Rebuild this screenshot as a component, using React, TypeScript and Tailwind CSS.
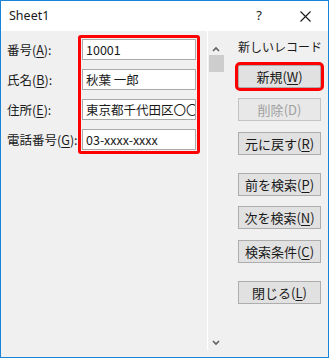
import React from "react";

const jp = { fontFamily: '"Noto Sans CJK JP", "Noto Sans", sans-serif' };

const fields = [
  { label: "番号", key: "A", value: "10001" },
  { label: "氏名", key: "B", value: "秋葉 一郎" },
  { label: "住所", key: "E", value: "東京都千代田区〇〇" },
  { label: "電話番号", key: "G", value: "03-xxxx-xxxx" },
];

function Btn({
  label,
  mnemonic,
  disabled,
  className = "",
}: {
  label: string;
  mnemonic: string;
  disabled?: boolean;
  className?: string;
}) {
  return (
    <div
      className={`w-[83px] h-[23px] flex items-center justify-center text-[13px] border ${
        disabled
          ? "bg-[#e8e8e8] border-[#c4c4c4] text-[#a0a0a0]"
          : "bg-[#e1e1e1] border-[#adadad] text-[#1a1a1a]"
      } ${className}`}
    >
      {label}(
      {disabled ? <span>{mnemonic}</span> : <span className="underline underline-offset-2">{mnemonic}</span>})
    </div>
  );
}

export default function App() {
  return (
    <div
      className="w-[329px] h-[358px] border border-[#1883d7] flex flex-col bg-[#f0f0f0] overflow-hidden"
      style={jp}
    >
      {/* Title bar */}
      <div className="h-[30px] bg-white flex items-center shrink-0">
        <span className="ml-[8px] text-[12.5px] text-[#1a1a1a]" style={{ fontFamily: '"Noto Sans", sans-serif' }}>
          Sheet1
        </span>
        <span className="ml-auto mr-[38px] text-[13px] text-[#1a1a1a]" style={{ fontFamily: '"Noto Sans", sans-serif' }}>
          ?
        </span>
        <svg className="mr-[17px]" width="11" height="11" viewBox="0 0 11 11">
          <path d="M0.5 0.5 L10.5 10.5 M10.5 0.5 L0.5 10.5" stroke="#1a1a1a" strokeWidth="1.1" />
        </svg>
      </div>

      {/* Body */}
      <div className="flex-1 flex">
        {/* Fields */}
        <div className="w-[206px] flex pl-[6px] pt-[4px]">
          <div className="w-[71px] pt-[4px] flex flex-col gap-[9px]">
            {fields.map((f) => (
              <div key={f.key} className="h-[21px] leading-[21px] text-[12.5px] text-[#1a1a1a] whitespace-nowrap">
                {f.label}(<span className="underline underline-offset-2">{f.key}</span>):
              </div>
            ))}
          </div>
          <div className="self-start border-[3px] border-[#ff0000] rounded-[3px] p-[1px] flex flex-col gap-[9px]">
            {fields.map((f) => (
              <div
                key={f.key}
                className="w-[114px] h-[21px] bg-white border border-[#a9a9a9] pl-[3px] text-[12.5px] leading-[19px] text-[#1a1a1a] whitespace-nowrap overflow-hidden"
              >
                {f.value}
              </div>
            ))}
          </div>
        </div>

        {/* Scrollbar */}
        <div className="w-[18px] border-l border-white mb-[7px] flex flex-col items-start pl-[1px]">
          <svg className="mt-[15px] ml-[3px]" width="8" height="6" viewBox="0 0 8 6">
            <path d="M1 5 L4 2 L7 5" stroke="#606060" strokeWidth="1.6" fill="none" />
          </svg>
          <div className="mt-[3px] w-[15px] h-[17px] bg-[#cdcdcd]" />
          <svg className="mt-auto mb-[4px] ml-[3px]" width="8" height="6" viewBox="0 0 8 6">
            <path d="M1 1 L4 4 L7 1" stroke="#606060" strokeWidth="1.6" fill="none" />
          </svg>
        </div>

        {/* Buttons */}
        <div className="flex-1 flex flex-col pl-[13px]">
          <div className="w-[83px] h-[16px] mt-[8px] text-[12px] leading-[16px] text-center text-[#1a1a1a] whitespace-nowrap">
            新しいレコード
          </div>
          <div className="mt-[10px] outline-[3px] outline-[#ff0000] rounded-[2px] w-[83px]">
            <Btn label="新規" mnemonic="W" />
          </div>
          <Btn label="削除" mnemonic="D" disabled className="mt-[10px]" />
          <Btn label="元に戻す" mnemonic="R" className="mt-[11px]" />
          <Btn label="前を検索" mnemonic="P" className="mt-[18px]" />
          <Btn label="次を検索" mnemonic="N" className="mt-[10px]" />
          <Btn label="検索条件" mnemonic="C" className="mt-[11px]" />
          <Btn label="閉じる" mnemonic="L" className="mt-[18px]" />
        </div>
      </div>
    </div>
  );
}
